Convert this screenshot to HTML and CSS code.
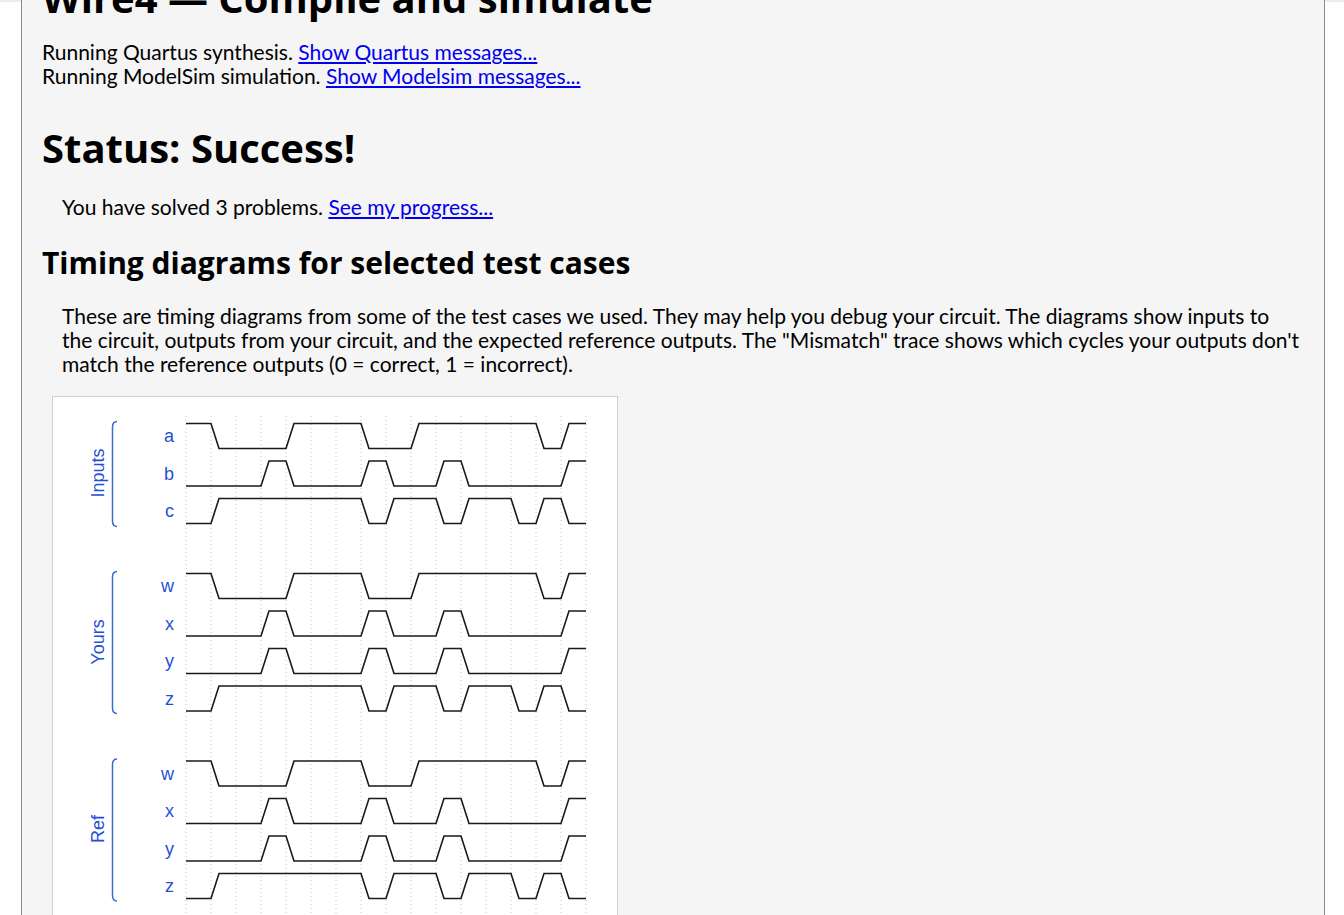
FILE: index.html
```html
<!DOCTYPE html>
<html>
<head>
<meta charset="utf-8">
<title>Wire4 — Compile and simulate</title>
<link rel="stylesheet" href="styles.css">
</head>
<body>
<div class="topline"></div>
<div class="page">
  <h1 class="title">Wire4 — Compile and simulate</h1>
  <div class="log">
    Running Quartus synthesis. <a href="#">Show Quartus messages...</a><br>
    Running ModelSim simulation. <a href="#">Show Modelsim messages...</a>
  </div>
  <h2 class="status">Status: Success!</h2>
  <p class="indent solved">You have solved 3 problems. <a href="#">See my progress...</a></p>
  <h3 class="sub">Timing diagrams for selected test cases</h3>
  <p class="indent desc">These are timing diagrams from some of the test cases we used. They may help you debug your circuit. The diagrams show inputs to the circuit, outputs from your circuit, and the expected reference outputs. The "Mismatch" trace shows which cycles your outputs don't match the reference outputs (0 = correct, 1 = incorrect).</p>
  <div class="diagram">
    <svg width="564" height="560" viewBox="53 397 564 560" xmlns="http://www.w3.org/2000/svg">
      <g class="grid">
        <path d="M186 416V957M211 416V957M236 416V957M261 416V957M286 416V957M311 416V957M336 416V957M361 416V957M386 416V957M411 416V957M436 416V957M461 416V957M486 416V957M511 416V957M536 416V957M561 416V957M586 416V957"/>
      </g>
      <g class="brace">
        <path d="M117 421.5 Q112.5 421.5 112.5 427 V521 Q112.5 526.5 117 526.5"/>
        <path d="M117 571.5 Q112.5 571.5 112.5 577 V708 Q112.5 713.5 117 713.5"/>
        <path d="M117 759 Q112.5 759 112.5 764.5 V895.5 Q112.5 901 117 901"/>
      </g>
      <g class="group">
        <text transform="translate(104 473) rotate(-90)">Inputs</text>
        <text transform="translate(104 642) rotate(-90)">Yours</text>
        <text transform="translate(104 829) rotate(-90)">Ref</text>
      </g>
      <g class="names">
        <text x="174" y="436">a</text>
        <text x="174" y="473.5">b</text>
        <text x="174" y="511">c</text>
        <text x="174" y="586">w</text>
        <text x="174" y="623.5">x</text>
        <text x="174" y="661">y</text>
        <text x="174" y="698.5">z</text>
        <text x="174" y="773.5">w</text>
        <text x="174" y="811">x</text>
        <text x="174" y="848.5">y</text>
        <text x="174" y="886">z</text>
      </g>
      <g class="wave">
        <path d="M186 423.5H211L219 448.5H286L294 423.5H361L369 448.5H411L419 423.5H536L544 448.5H561L569 423.5H586"/>
        <path d="M186 486H261L269 461H286L294 486H361L369 461H386L394 486H436L444 461H461L469 486H561L569 461H586"/>
        <path d="M186 523.5H211L219 498.5H361L369 523.5H386L394 498.5H436L444 523.5H461L469 498.5H511L519 523.5H536L544 498.5H561L569 523.5H586"/>

        <path d="M186 573.5H211L219 598.5H286L294 573.5H361L369 598.5H411L419 573.5H536L544 598.5H561L569 573.5H586"/>
        <path d="M186 636H261L269 611H286L294 636H361L369 611H386L394 636H436L444 611H461L469 636H561L569 611H586"/>
        <path d="M186 673.5H261L269 648.5H286L294 673.5H361L369 648.5H386L394 673.5H436L444 648.5H461L469 673.5H561L569 648.5H586"/>
        <path d="M186 711H211L219 686H361L369 711H386L394 686H436L444 711H461L469 686H511L519 711H536L544 686H561L569 711H586"/>

        <path d="M186 761H211L219 786H286L294 761H361L369 786H411L419 761H536L544 786H561L569 761H586"/>
        <path d="M186 823.5H261L269 798.5H286L294 823.5H361L369 798.5H386L394 823.5H436L444 798.5H461L469 823.5H561L569 798.5H586"/>
        <path d="M186 861H261L269 836H286L294 861H361L369 836H386L394 861H436L444 836H461L469 861H561L569 836H586"/>
        <path d="M186 898.5H211L219 873.5H361L369 898.5H386L394 873.5H436L444 898.5H461L469 873.5H511L519 898.5H536L544 873.5H561L569 898.5H586"/>
      </g>
    </svg>
  </div>
</div>
</body>
</html>
```
FILE: styles.css
```css
html, body {
  margin: 0;
  padding: 0;
  background: #ffffff;
  overflow: hidden;
}

body {
  font-family: "Lato", "Open Sans", sans-serif;
  font-weight: 400;
  font-size: 21px;
  line-height: 24px;
  color: #000;
}

.topline {
  height: 2px;
  background: #ececec;
}

.page {
  margin: 0 19px 0 21px;
  border-left: 1px solid #8a8a8a;
  border-right: 1px solid #8a8a8a;
  background: #f5f5f5;
  padding: 0 20px;
  height: 1100px;
}

a {
  color: #0000ee;
  text-decoration: underline;
}

.title {
  font-family: "Open Sans", sans-serif;
  font-weight: 700;
  font-size: 40px;
  line-height: 48px;
  margin: -28px 0 0 0;
}

.log {
  margin-top: 18px;
}

.status {
  font-family: "Open Sans", sans-serif;
  font-weight: 700;
  font-size: 40px;
  line-height: 48px;
  margin: 36px 0 0 0;
}

.indent {
  margin: 0;
  padding-left: 20px;
}

.solved {
  margin-top: 23px;
}

.sub {
  font-family: "Open Sans", sans-serif;
  font-weight: 700;
  font-size: 30px;
  line-height: 36px;
  margin: 26px 0 0 0;
}

.desc {
  margin-top: 23px;
}

.diagram {
  margin: 20px 0 0 10px;
  width: 564px;
  height: 560px;
  background: #ffffff;
  border: 1px solid #cfcfcf;
}

.diagram svg {
  display: block;
}

.grid path {
  stroke: #c4c4c4;
  stroke-width: 1;
  stroke-dasharray: 1 3;
  fill: none;
}

.brace path {
  stroke: #3a6bd0;
  stroke-width: 1.5;
  fill: none;
}

.group text {
  font-family: "Liberation Sans", Arial, sans-serif;
  font-size: 18px;
  fill: #1f50d6;
  text-anchor: middle;
}

.names text {
  font-family: "Liberation Sans", Arial, sans-serif;
  font-size: 18px;
  fill: #1f50d6;
  text-anchor: end;
  dominant-baseline: central;
}

.wave path {
  stroke: #1a1a1a;
  stroke-width: 1.6;
  fill: none;
  stroke-linejoin: miter;
}
```
